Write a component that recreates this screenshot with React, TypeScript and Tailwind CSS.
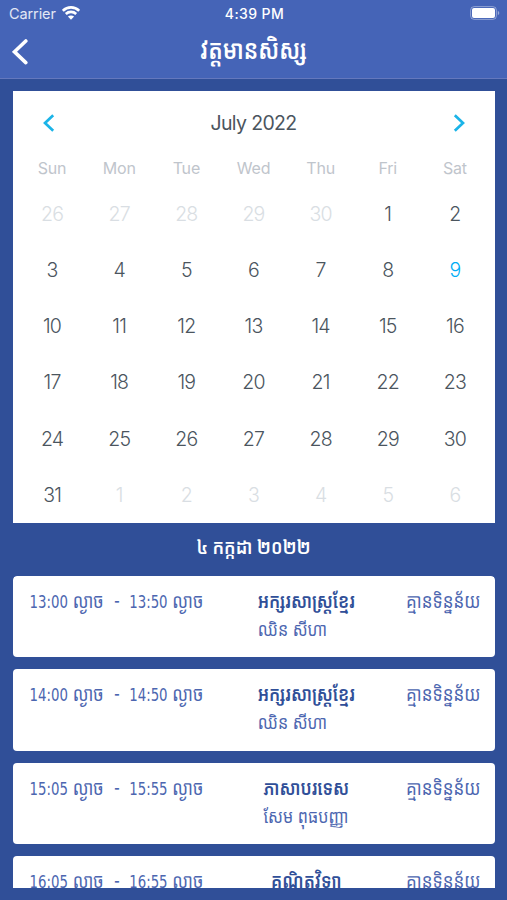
type Lesson = {
  start: string;
  end: string;
  subject: string;
  teacher: string;
  status: string;
};

const weekDays = ["Sun", "Mon", "Tue", "Wed", "Thu", "Fri", "Sat"];

const days = [
  ...[26, 27, 28, 29, 30].map((day) => ({ day, outside: true })),
  ...Array.from({ length: 31 }, (_, i) => ({ day: i + 1, outside: false })),
  ...[1, 2, 3, 4, 5, 6].map((day) => ({ day, outside: true })),
];

const TODAY = 9;

const lessons: Lesson[] = [
  {
    start: "13:00",
    end: "13:50",
    subject: "អក្សរសាស្ត្រខ្មែរ",
    teacher: "ឈិន សីហា",
    status: "គ្មានទិន្នន័យ",
  },
  {
    start: "14:00",
    end: "14:50",
    subject: "អក្សរសាស្ត្រខ្មែរ",
    teacher: "ឈិន សីហា",
    status: "គ្មានទិន្នន័យ",
  },
  {
    start: "15:05",
    end: "15:55",
    subject: "ភាសាបរទេស",
    teacher: "សែម ពុធបញ្ញា",
    status: "គ្មានទិន្នន័យ",
  },
  {
    start: "16:05",
    end: "16:55",
    subject: "គណិតវិទ្យា",
    teacher: "",
    status: "គ្មានទិន្នន័យ",
  },
];

const StatusBar = () => (
  <div className="grid h-[27px] grid-cols-3 items-center pl-[9px] pr-[7px] text-[14px] leading-none">
    <div className="flex items-center gap-[6px]">
      <span className="pt-px text-[14.5px] tracking-[-0.1px] text-white/85">Carrier</span>
      <svg className="-mt-px" width="18" height="14" viewBox="0 0 18 14" fill="none">
        <path d="M.8 4.8C5.4.3 12.6.3 17.2 4.8" stroke="white" strokeWidth="2.7" />
        <path d="M3.8 8c2.9-2.8 7.5-2.8 10.4 0" stroke="white" strokeWidth="2.6" />
        <path d="M9 13.8 5.9 10.6c1.7-1.6 4.5-1.6 6.2 0L9 13.8Z" fill="white" />
      </svg>
    </div>
    <span className="text-center font-medium tracking-[0.4px]">4:39 PM</span>
    <svg className="-mt-px justify-self-end" width="30" height="14" viewBox="0 0 30 14" fill="none">
      <rect x="0.6" y="0.6" width="25.8" height="12.8" rx="3.6" stroke="white" strokeOpacity="0.4" />
      <rect x="2" y="2" width="23" height="10" rx="2" fill="white" />
      <path d="M27.8 4.8c2 .8 2 3.6 0 4.4V4.8Z" fill="white" fillOpacity="0.45" />
    </svg>
  </div>
);

const Header = () => (
  <header className="h-[79px] flex-none border-b border-[#6478bd] bg-[#4564b7] text-white">
    <StatusBar />
    <div className="grid h-[50px] grid-cols-[40px_1fr_40px] items-center">
      <button className="pl-3" aria-label="Back">
        <svg width="16" height="27" viewBox="0 0 16 27" fill="none">
          <path d="M13.8 2 2.5 12.8l11.3 10.8" stroke="white" strokeWidth="3.6" strokeLinecap="round" />
        </svg>
      </button>
      <h1 className="scale-y-120 pb-[3px] text-center text-[21.9px] font-semibold leading-none">
        វត្តមានសិស្ស
      </h1>
    </div>
  </header>
);

const Calendar = () => (
  <section className="h-[431.5px] flex-none overflow-hidden bg-white px-[6px] text-[#4b555e]">
    <div className="flex h-[63px] items-center justify-between px-[24px]">
      <button aria-label="Previous month">
        <svg width="12" height="18" viewBox="0 0 12 18" fill="none">
          <path d="M10.2 1.2 2 9l8.2 7.8" stroke="#1bb4e8" strokeWidth="2.7" />
        </svg>
      </button>
      <span className="pt-[2px] text-[19.5px] tracking-[-0.65px]">July 2022</span>
      <button aria-label="Next month">
        <svg width="12" height="18" viewBox="0 0 12 18" fill="none">
          <path d="M1.8 1.2 10 9l-8.2 7.8" stroke="#1bb4e8" strokeWidth="2.7" />
        </svg>
      </button>
    </div>
    <div className="grid h-8 grid-cols-7 items-center pb-[5px] text-center text-[16px] tracking-[-0.2px] text-[#bfc5cc]">
      {weekDays.map((name) => (
        <span key={name}>{name}</span>
      ))}
    </div>
    <div className="grid auto-rows-[56.2px] grid-cols-7 items-center text-center text-[19.5px] font-light tracking-[-0.8px]">
      {days.map(({ day, outside }, i) => (
        <span
          key={i}
          className={
            outside ? "text-[#d9dee3]" : day === TODAY ? "text-[#00adf5]" : ""
          }
        >
          {day}
        </span>
      ))}
    </div>
  </section>
);

const Time = ({ value }: { value: string }) => (
  <span>
    <span className="font-['DejaVu_Sans_Condensed','DejaVu_Sans'] text-[14.8px] font-stretch-condensed">
      {value}
    </span>{" "}
    ល្ងាច
  </span>
);

const LessonCard = ({ lesson }: { lesson: Lesson }) => (
  <article className="flex h-[81.5px] flex-none items-start justify-between rounded-[4px] bg-white pl-[17px] pr-[14px] pt-[11px] text-[17px] leading-[28px] text-[#4c66b0]">
    <div className="flex w-[174px] scale-y-118 justify-between whitespace-nowrap">
      <Time value={lesson.start} />
      <span className="scale-x-75">-</span>
      <Time value={lesson.end} />
    </div>
    <div className="flex flex-1 justify-center whitespace-nowrap pl-[3px]">
      <div>
        <p className="scale-y-118 text-[16.9px] font-semibold text-[#304f98]">{lesson.subject}</p>
        <p className="scale-y-118 text-[16.1px]">{lesson.teacher}</p>
      </div>
    </div>
    <span className="scale-y-118 whitespace-nowrap">{lesson.status}</span>
  </article>
);

const App = () => (
  <div className="flex h-[900px] w-[507px] flex-col overflow-hidden bg-[#304f98] font-[Inter,'Noto_Sans_Khmer','Khmer_OS',sans-serif]">
    <Header />
    <main className="flex min-h-0 flex-1 flex-col px-[12.5px] pb-3 pt-[12.3px]">
      <Calendar />
      <h2 className="flex h-[53.2px] flex-none scale-y-115 items-center justify-center pb-1 text-[17.5px] font-semibold text-white">
        ៤ កក្កដា ២០២២
      </h2>
      <div className="flex min-h-0 flex-1 flex-col gap-[11.8px] overflow-hidden rounded-t-[4px]">
        {lessons.map((lesson) => (
          <LessonCard key={lesson.start} lesson={lesson} />
        ))}
      </div>
    </main>
  </div>
);

export default App;
